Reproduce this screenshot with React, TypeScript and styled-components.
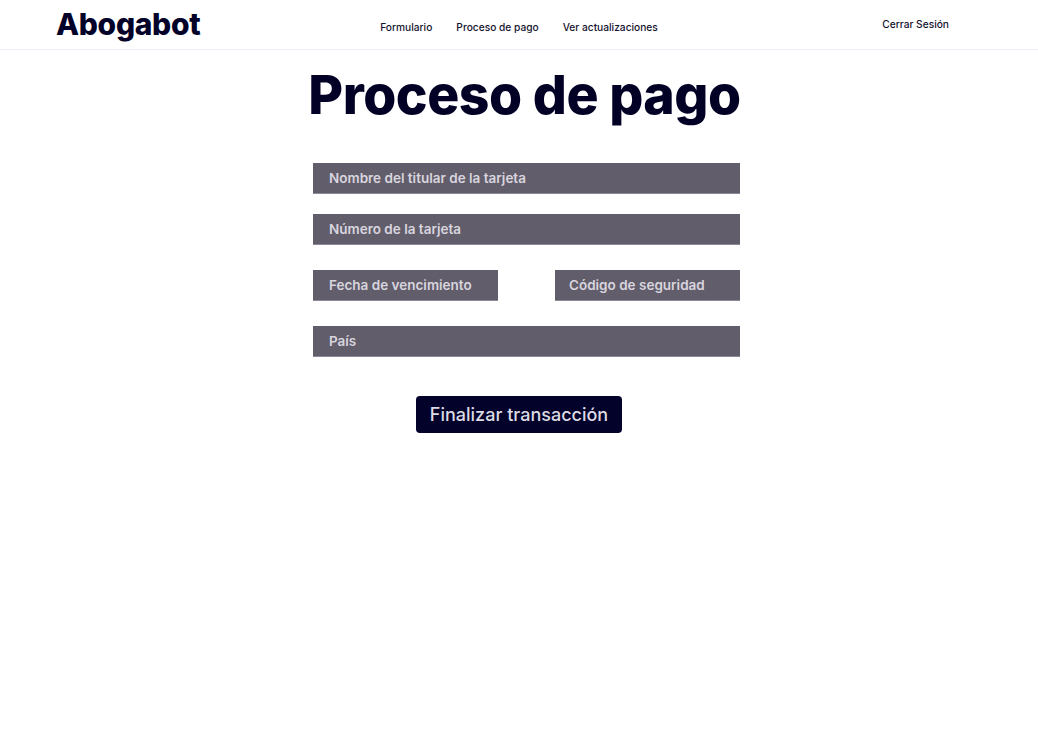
import React from "react";
import styled, { createGlobalStyle } from "styled-components";

const Global = createGlobalStyle`
  html, body { margin: 0; padding: 0; background: #ffffff; }
  body { font-family: "Inter", "Noto Sans", sans-serif; color: #020125; }
  * { box-sizing: border-box; }
`;

const Header = styled.header`
  height: 50px;
  border-bottom: 1px solid #eeeef6;
  display: grid;
  grid-template-columns: 1fr auto 1fr;
  align-items: center;
  padding: 0 56px;
`;

const Logo = styled.div`
  font-family: "Inter", sans-serif;
  font-weight: 800;
  font-size: 30px;
  letter-spacing: -0.3px;
  color: #030228;
  line-height: 1;
  margin-top: -2px;
`;

const Nav = styled.nav`
  display: flex;
  gap: 24px;
  margin-top: 5px;
`;

const NavLink = styled.a`
  font-family: "Inter", sans-serif;
  font-size: 10.2px;
  font-weight: 500;
  color: #14132e;
  text-decoration: none;
`;

const Right = styled.div`
  justify-self: end;
  margin: -6px 33px 0 0;
`;

const Main = styled.main`
  display: flex;
  flex-direction: column;
  align-items: center;
`;

const Title = styled.h1`
  margin: 12px 0 0 11px;
  font-family: "Inter", sans-serif;
  font-weight: 800;
  font-size: 53.5px;
  letter-spacing: -0.5px;
  line-height: 66px;
  color: #020125;
`;

const Form = styled.form`
  width: 427px;
  margin: 35px 0 0 15px;
  display: flex;
  flex-direction: column;
`;

const Row = styled.div<{ $gap: number }>`
  display: flex;
  justify-content: space-between;
  margin-top: ${(p) => p.$gap}px;
`;

const Field = styled.div<{ $w?: number; $pad?: number }>`
  width: ${(p) => (p.$w ? `${p.$w}px` : "100%")};
  height: 31px;
  background: #625d6b;
  border-bottom: 1px solid #8d8896;
  display: flex;
  align-items: center;
  padding-left: ${(p) => p.$pad ?? 16}px;
  font-family: "Inter", sans-serif;
  font-weight: 600;
  font-size: 13.5px;
  color: #d8d5de;
`;

const Button = styled.button`
  margin-top: 39px;
  width: 206px;
  height: 37px;
  background: #03022a;
  border: none;
  border-radius: 4px;
  color: #dcdbe3;
  font-family: "Inter", sans-serif;
  font-weight: 500;
  font-size: 18px;
  cursor: pointer;
`;

export default function App() {
  return (
    <>
      <Global />
      <Header>
        <Logo>Abogabot</Logo>
        <Nav>
          <NavLink>Formulario</NavLink>
          <NavLink>Proceso de pago</NavLink>
          <NavLink>Ver actualizaciones</NavLink>
        </Nav>
        <Right>
          <NavLink>Cerrar Sesión</NavLink>
        </Right>
      </Header>
      <Main>
        <Title>Proceso de pago</Title>
        <Form>
          <Row $gap={0}>
            <Field>Nombre del titular de la tarjeta</Field>
          </Row>
          <Row $gap={20}>
            <Field>Número de la tarjeta</Field>
          </Row>
          <Row $gap={25}>
            <Field $w={185}>Fecha de vencimiento</Field>
            <Field $w={185} $pad={14}>Código de seguridad</Field>
          </Row>
          <Row $gap={25}>
            <Field>País</Field>
          </Row>
        </Form>
        <Button>Finalizar transacción</Button>
      </Main>
    </>
  );
}
